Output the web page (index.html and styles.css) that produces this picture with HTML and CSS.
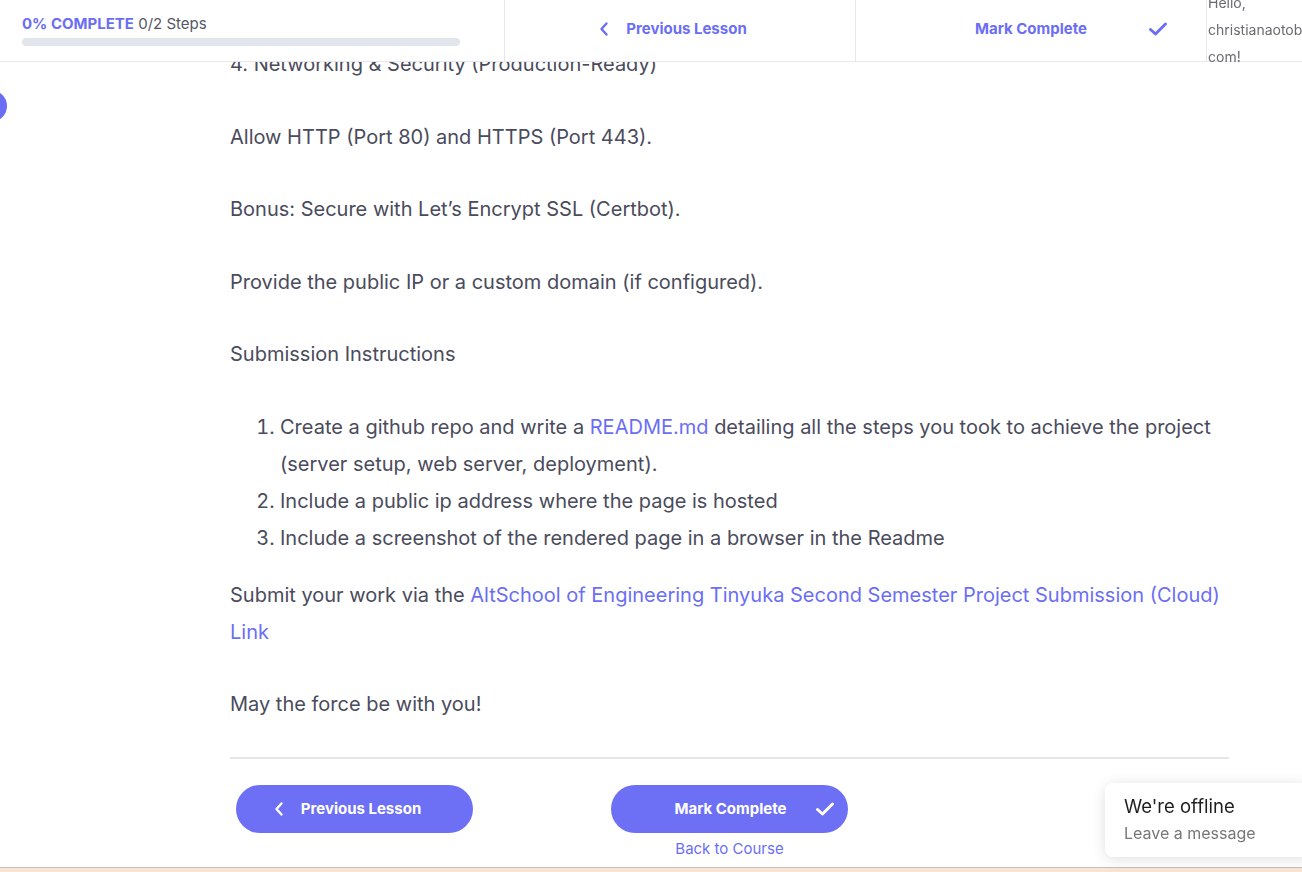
FILE: index.html
```html
<!DOCTYPE html>
<html lang="en">
<head>
<meta charset="utf-8">
<title>Lesson</title>
<link rel="stylesheet" href="styles.css">
</head>
<body>
<header class="topbar">
  <div class="progress-cell">
    <div class="progress-label"><span class="pct">0% COMPLETE</span> <span class="steps">0/2 Steps</span></div>
    <div class="progress-track"></div>
  </div>
  <a class="nav-cell prev" href="#">
    <svg class="chev" viewBox="0 0 10 16" width="10" height="16"><path d="M7.5 2.5 L2.5 8 L7.5 13.5" fill="none" stroke="currentColor" stroke-width="2.4" stroke-linecap="round" stroke-linejoin="round"/></svg>
    <span>Previous Lesson</span>
  </a>
  <a class="nav-cell mark" href="#">
    <span>Mark Complete</span>
    <svg class="check" viewBox="0 0 20 16" width="20" height="16"><path d="M2.5 8.5 L7.5 13 L17.5 3" fill="none" stroke="currentColor" stroke-width="3" stroke-linecap="round" stroke-linejoin="round"/></svg>
  </a>
  <div class="greeting-cell">
    <div class="greeting">Hello,<br>christianaotoba@gmail.<br>com!</div>
  </div>
</header>

<span class="side-dot"></span>

<main class="lesson">
  <p>4. Networking &amp; Security (Production-Ready)</p>
  <p>Allow HTTP (Port 80) and HTTPS (Port 443).</p>
  <p>Bonus: Secure with Let’s Encrypt SSL (Certbot).</p>
  <p>Provide the public IP or a custom domain (if configured).</p>
  <p>Submission Instructions</p>
  <ol>
    <li>Create a github repo and write a <a class="inline-link" href="#">README.md</a> detailing all the steps you took to achieve the project (server setup, web server, deployment).</li>
    <li>Include a public ip address where the page is hosted</li>
    <li>Include a screenshot of the rendered page in a browser in the Readme</li>
  </ol>
  <p>Submit your work via the <a class="inline-link" href="#">AltSchool of Engineering Tinyuka Second Semester Project Submission (Cloud) Link</a></p>
  <p class="last">May the force be with you!</p>

  <div class="footer-nav">
    <a class="btn btn-prev" href="#">
      <svg class="chev" viewBox="0 0 10 16" width="10" height="16"><path d="M7.5 2.5 L2.5 8 L7.5 13.5" fill="none" stroke="currentColor" stroke-width="2.4" stroke-linecap="round" stroke-linejoin="round"/></svg>
      <span>Previous Lesson</span>
    </a>
    <div class="mark-wrap">
      <a class="btn btn-mark" href="#">
        <span>Mark Complete</span>
        <svg class="check" viewBox="0 0 20 16" width="20" height="16"><path d="M2.5 8.5 L7.5 13 L17.5 3" fill="none" stroke="currentColor" stroke-width="3" stroke-linecap="round" stroke-linejoin="round"/></svg>
      </a>
      <a class="back" href="#">Back to Course</a>
    </div>
  </div>
</main>

<footer class="page-foot"></footer>

<div class="chat">
  <div class="chat-title">We're offline</div>
  <div class="chat-sub">Leave a message</div>
</div>
</body>
</html>
```

FILE: styles.css
```css
html, body {
  margin: 0;
  padding: 0;
  overflow: hidden;
}
body {
  font-family: Inter, "Noto Sans", sans-serif;
  background: #fff;
  min-height: 100vh;
  display: flex;
  flex-direction: column;
  color: #4a4b5c;
}
a { text-decoration: none; }

.topbar {
  position: fixed;
  top: 0;
  left: 0;
  right: 0;
  height: 61px;
  background: #fff;
  border-bottom: 1px solid #e5e7eb;
  display: flex;
  z-index: 5;
}
.progress-cell {
  flex: 0 0 504px;
  box-sizing: border-box;
  padding: 14px 0 0 22px;
}
.progress-label {
  font-size: 15px;
  line-height: 19px;
  white-space: nowrap;
}
.pct {
  color: #6b6ef5;
  font-weight: 700;
}
.steps {
  color: #555766;
}
.progress-track {
  margin-top: 5px;
  width: 438px;
  height: 8px;
  border-radius: 4px;
  background: #e2e6ec;
}
.nav-cell {
  flex: 0 0 351px;
  box-sizing: border-box;
  border-left: 1px solid #e5e7eb;
  display: flex;
  align-items: center;
  justify-content: center;
  color: #6b6ef5;
  font-size: 15px;
  font-weight: 700;
  padding-bottom: 4px;
}
.nav-cell.prev { padding-right: 8px; }
.nav-cell.prev .chev { margin-right: 17px; margin-left: -6px; }
.nav-cell.mark { padding-left: 81px; }
.nav-cell.mark .check { margin-left: 61px; }
.greeting-cell {
  flex: 1 1 0;
  min-width: 0;
  border-left: 1px solid #e5e7eb;
  display: flex;
  align-items: center;
}
.greeting {
  padding-left: 1px;
  padding-bottom: 2px;
  font-size: 14px;
  line-height: 27px;
  color: #6a6a70;
  white-space: nowrap;
}

.side-dot {
  position: fixed;
  left: -9px;
  top: 90px;
  width: 16px;
  height: 32px;
  border-radius: 0 16px 16px 0;
  background: #6b6ef5;
}

.lesson {
  flex: 1;
  box-sizing: border-box;
  width: 999px;
  margin-left: 230px;
  padding-top: 46px;
  font-size: 20px;
  line-height: 37px;
}
.lesson p {
  margin: 0 0 35.5px;
}
.lesson p.last { margin-bottom: 33.5px; }
.inline-link { color: #6b6ef5; }
.lesson ol {
  margin: 0 0 20px;
  padding-left: 50px;
}

.footer-nav {
  border-top: 2px solid #e3e7eb;
  padding: 26px 0 0 6px;
  display: flex;
  align-items: flex-start;
  gap: 138px;
}
.btn {
  width: 237px;
  height: 48px;
  border-radius: 24px;
  background: #6d70f5;
  color: #fff;
  font-size: 15px;
  font-weight: 700;
  display: flex;
  align-items: center;
  justify-content: center;
  line-height: 1;
  box-sizing: border-box;
}
.btn-prev { padding-right: 8px; }
.btn .chev { margin-right: 17px; margin-left: -6px; }
.btn-mark { padding-left: 50px; }
.btn-mark .check { margin-left: 28px; }
.mark-wrap {
  display: flex;
  flex-direction: column;
  align-items: center;
}
.back {
  color: #6b6ef5;
  font-size: 15px;
  line-height: 18px;
  margin-top: 7px;
}

.page-foot {
  height: 4px;
  border-top: 1px solid #c9bfb6;
  background: #f8e4d4;
}

.chat {
  position: fixed;
  right: -10px;
  bottom: 15px;
  width: 207px;
  height: 74px;
  box-sizing: border-box;
  padding: 12px 0 0 19px;
  background: #fff;
  border-radius: 8px;
  box-shadow: 0 2px 14px rgba(0,0,0,0.13);
}
.chat-title {
  color: #1f1f1f;
  font-size: 18.5px;
  line-height: 23px;
}
.chat-sub {
  color: #777;
  font-size: 16px;
  line-height: 20px;
  margin-top: 5px;
}
```
